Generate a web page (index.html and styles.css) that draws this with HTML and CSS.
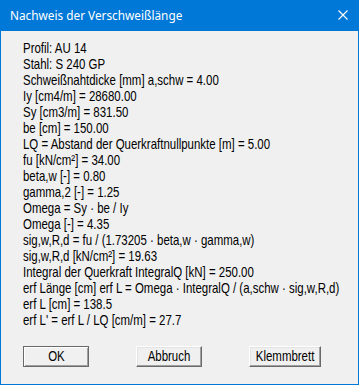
FILE: index.html
```html
<!DOCTYPE html>
<html lang="de">
<head>
    <meta charset="utf-8">
    <title>Nachweis der Verschweißlänge</title>
    <link rel="stylesheet" href="styles.css">
</head>
<body>

    <div class="window">

        <div class="titlebar">
            <span class="title">Nachweis der Verschweißlänge</span>
            <svg class="close" width="10" height="10" viewBox="0 0 10 10">
                <path d="M0.5 0.5 L9.5 9.5 M9.5 0.5 L0.5 9.5" stroke="#fff" stroke-width="1.1" fill="none"/>
            </svg>
        </div>

        <div class="content">
            <div class="lines">
                <div>Profil: AU 14</div>
                <div>Stahl: S 240 GP</div>
                <div>Schweißnahtdicke [mm] a,schw = 4.00</div>
                <div>Iy [cm4/m] = 28680.00</div>
                <div>Sy [cm3/m] = 831.50</div>
                <div>be [cm] = 150.00</div>
                <div>LQ = Abstand der Querkraftnullpunkte [m] = 5.00</div>
                <div>fu [kN/cm²] = 34.00</div>
                <div>beta,w [-] = 0.80</div>
                <div>gamma,2 [-] = 1.25</div>
                <div>Omega = Sy · be / Iy</div>
                <div>Omega [-] = 4.35</div>
                <div>sig,w,R,d = fu / (1.73205 · beta,w · gamma,w)</div>
                <div>sig,w,R,d [kN/cm²] = 19.63</div>
                <div>Integral der Querkraft IntegralQ [kN] = 250.00</div>
                <div>erf Länge [cm] erf L = Omega · IntegralQ / (a,schw · sig,w,R,d)</div>
                <div>erf L [cm] = 138.5</div>
                <div>erf L' = erf L / LQ [cm/m] = 27.7</div>
            </div>

            <div class="buttons">
                <button class="btn default"><span>OK</span></button>
                <button class="btn"><span>Abbruch</span></button>
                <button class="btn wide"><span>Klemmbrett</span></button>
            </div>
        </div>

    </div>

</body>
</html>
```

FILE: styles.css
```css
html, body {
    margin: 0;
    width: 100%;
    height: 100%;
}
body {
    background: #f0f0f0;
}
.window {
    display: flex;
    flex-direction: column;
    box-sizing: border-box;
    width: 359px;
    height: 385px;
    border: 1px solid #0078d7;
    border-top: none;
    background: #f0f0f0;
    overflow: hidden;
}
.titlebar {
    display: flex;
    align-items: center;
    justify-content: space-between;
    height: 31px;
    padding: 0 10px 0 9px;
    background: #0078d7;
    color: #fff;
    font-family: "Noto Sans", sans-serif;
    font-size: 11.8px;
}
.title {
    padding-bottom: 1px;
}
.close {
    display: block;
    margin-bottom: 1px;
}
.content {
    display: flex;
    flex-direction: column;
    padding: 9px 0 0 22px;
    font-family: "Liberation Sans", Arial, sans-serif;
    font-size: 14.5px;
    color: #000;
}
/* the dialog font is narrower than Arial */
.lines {
    transform: scaleX(0.79);
    transform-origin: left top;
}
.lines div {
    height: 16px;
    line-height: 16px;
    white-space: nowrap;
}
.buttons {
    display: flex;
    gap: 47px;
    margin-top: 18px;
}
.btn {
    box-sizing: border-box;
    display: flex;
    align-items: center;
    justify-content: center;
    width: 66px;
    height: 21px;
    padding: 0 0 1px 0;
    font-family: "Liberation Sans", Arial, sans-serif;
    font-size: 14.5px;
    color: #000;
    background: #f0f0f0;
    border: 1px solid;
    border-color: #fff #696969 #696969 #fff;
    box-shadow: inset -1px -1px 0 #a0a0a0, inset 1px 1px 0 #e3e3e3;
    outline: none;
}
.btn span {
    display: inline-block;
    transform: scaleX(0.79);
}
.btn.wide {
    width: 72px;
}
.btn.default {
    border: 1px solid #696969;
    box-shadow: inset 1px 1px 0 #fff, inset -1px -1px 0 #a0a0a0;
}
```
